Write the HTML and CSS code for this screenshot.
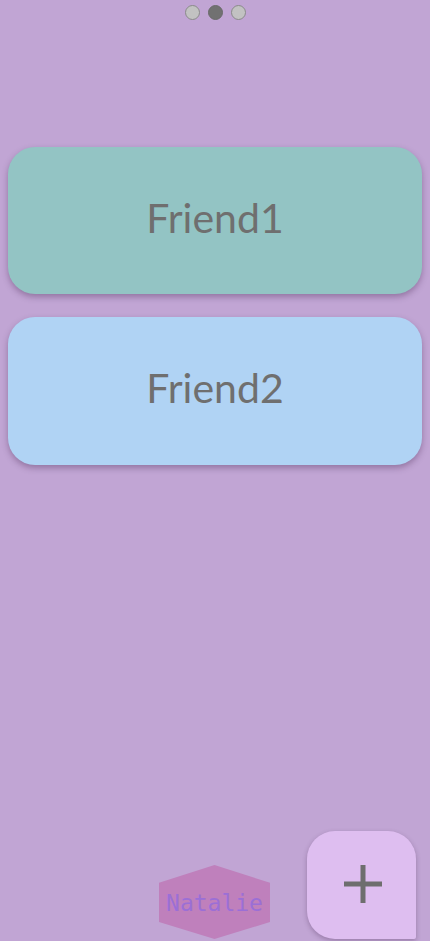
FILE: index.html
```html
<!DOCTYPE html>
<html>
<head>
<meta charset="utf-8">
<link rel="stylesheet" href="styles.css">
</head>
<body>
<div class="screen">
  <div class="dots">
    <span class="dot"></span>
    <span class="dot active"></span>
    <span class="dot"></span>
  </div>
  <div class="cards">
    <div class="card card-teal">Friend1</div>
    <div class="card card-blue">Friend2</div>
  </div>
  <div class="bottom">
    <div class="hex">Natalie</div>
    <button class="fab" aria-label="Add">
      <svg width="38" height="38" viewBox="0 0 38 38"><path d="M19 0V38M0 19H38" stroke="#6e6e6e" stroke-width="5" fill="none"/></svg>
    </button>
  </div>
</div>
</body>
</html>
```
FILE: styles.css
```css
html, body {
  margin: 0;
  padding: 0;
}
body {
  background: #c1a5d4;
  font-family: "Lato", "Open Sans", sans-serif;
}
.screen {
  position: relative;
  width: 430px;
  height: 941px;
  display: flex;
  flex-direction: column;
  overflow: hidden;
}
.dots {
  display: flex;
  justify-content: center;
  gap: 8px;
  padding-top: 5px;
}
.dot {
  width: 15px;
  height: 15px;
  box-sizing: border-box;
  border-radius: 50%;
  background: #c2c2c2;
  border: 1px solid #8a8a8a;
}
.dot.active {
  background: #717171;
  border-color: #6a6a6a;
}
.cards {
  display: flex;
  flex-direction: column;
  gap: 23px;
  padding: 0 8px;
  margin-top: 127px;
}
.card {
  height: 147px;
  box-sizing: border-box;
  padding-bottom: 7px;
  border-radius: 27px;
  display: flex;
  align-items: center;
  justify-content: center;
  font-size: 41px;
  color: #6f6f6f;
  box-shadow: 0 3px 6px rgba(60, 30, 70, 0.35);
}
.card-teal { background: #93c4c4; }
.card-blue { background: #b0d3f4; height: 148px; }
.bottom {
  margin-top: auto;
  height: 76px;
  padding-bottom: 2px;
  display: flex;
  justify-content: center;
  align-items: flex-end;
}
.hex {
  width: 111px;
  height: 74px;
  margin-left: -1px;
  background: #bf80bc;
  clip-path: polygon(50% 0, 100% 24%, 100% 77%, 50% 100%, 0 77%, 0 24%);
  display: flex;
  align-items: center;
  justify-content: center;
  font-family: "DejaVu Sans Mono", monospace;
  font-size: 23px;
  color: #9b6fd6;
  padding-top: 2px;
  box-sizing: border-box;
}
.fab {
  position: absolute;
  right: 14px;
  bottom: 2px;
  width: 109px;
  height: 108px;
  border: none;
  padding: 0;
  background: #debef0;
  border-radius: 28px 28px 2px 28px;
  box-shadow: 0 2px 5px rgba(60, 30, 70, 0.3);
  display: flex;
  align-items: center;
  justify-content: center;
}
.fab svg {
  display: block;
  margin-top: -2px;
  margin-left: 3px;
}
```
